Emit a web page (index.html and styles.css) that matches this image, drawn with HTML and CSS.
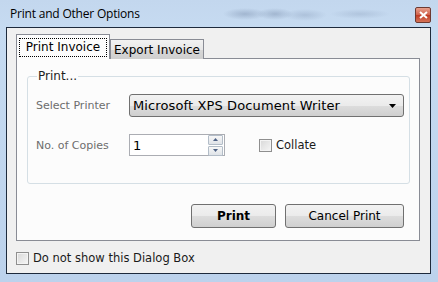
FILE: index.html
```html
<!DOCTYPE html>
<html lang="en">
<head>
  <meta charset="UTF-8">
  <title>Print and Other Options</title>
  <link rel="stylesheet" href="styles.css">
</head>
<body>
  <div class="window">
    <div class="titlebar">
      <span class="title">Print and Other Options</span>
      <span class="close">
        <svg width="9" height="8" viewBox="0 0 9 8"><path d="M1 1 L8 7 M8 1 L1 7" stroke="#fff" stroke-width="2"/></svg>
      </span>
    </div>

    <div class="client">
      <div class="tabs">
        <div class="tab active"><span class="focus">Print Invoice</span></div>
        <div class="tab">Export Invoice</div>
      </div>

      <div class="panel">
        <fieldset class="group">
          <legend>Print...</legend>
          <div class="row">
            <span class="label">Select Printer</span>
            <div class="combo">
              <span>Microsoft XPS Document Writer</span>
              <svg width="7" height="4" viewBox="0 0 7 4"><path d="M0 0 H7 L3.5 4 Z" fill="#000"/></svg>
            </div>
          </div>
          <div class="row">
            <span class="label">No. of Copies</span>
            <div class="spin">
              <span class="value">1</span>
              <div class="spin-btns">
                <span class="spin-btn"><svg width="5" height="3" viewBox="0 0 5 3"><path d="M0 3 H5 L2.5 0 Z" fill="#4d6185"/></svg></span>
                <span class="spin-btn"><svg width="5" height="3" viewBox="0 0 5 3"><path d="M0 0 H5 L2.5 3 Z" fill="#4d6185"/></svg></span>
              </div>
            </div>
            <span class="check"></span>
            <span class="check-text">Collate</span>
          </div>
        </fieldset>

        <div class="actions">
          <button class="btn primary">Print</button>
          <button class="btn cancel">Cancel Print</button>
        </div>
      </div>

      <div class="footer">
        <span class="check"></span>
        <span class="check-text">Do not show this Dialog Box</span>
      </div>
    </div>
  </div>
</body>
</html>
```

FILE: styles.css
```css
body { margin: 0; font-family: "DejaVu Sans", Verdana, sans-serif; font-size: 11px; color: #000; }

.window {
  width: 438px; height: 282px; box-sizing: border-box;
  display: flex; flex-direction: column;
  padding: 0 7px 8px 6px;
  background:
    radial-gradient(ellipse 22px 6px at 245px 14px, rgba(120,140,170,.45), transparent),
    radial-gradient(ellipse 18px 6px at 275px 14px, rgba(120,140,170,.45), transparent),
    radial-gradient(ellipse 22px 6px at 305px 15px, rgba(130,150,180,.35), transparent),
    radial-gradient(ellipse 30px 5px at 360px 14px, rgba(130,150,180,.3), transparent),
    linear-gradient(to bottom, #c3d7ee, #c6dbf1 30px, #bcd2ec);
}

.titlebar { height: 27px; display: flex; align-items: flex-start; justify-content: space-between; }
.title { font-family: "Open Sans", "Noto Sans", sans-serif; font-size: 12px; color: #000; margin: 5px 0 0 4px; letter-spacing: -0.2px; }
.close {
  width: 14px; height: 14px; margin: 7px 0 0 0;
  display: flex; align-items: center; justify-content: center;
  border: 1px solid #6d3a32; border-radius: 2px;
  background: linear-gradient(to bottom, #e8a08c, #d0604a 50%, #c03a22 51%, #d4745a);
}

.client {
  flex: 1; background: #f0f0f0; border: 1px solid #1d2a3c;
  padding: 7px 10px 0 9px;
  display: flex; flex-direction: column;
}

.tabs { display: flex; align-items: flex-end; height: 24px; margin-bottom: -1px; position: relative; z-index: 1; }
.tab {
  width: 92px; height: 19px; font-size: 12px;
  border: 1px solid #898c95; border-bottom: none;
  background: linear-gradient(to bottom, #f2f2f2, #e7e7e7 50%, #d7d7d7 51%, #cfcfcf);
  display: flex; align-items: center; justify-content: center;
}
.tab.active { height: 24px; background: #fcfcfc; }
.focus { border: 1px dotted #000; padding: 1px 3px 2px; width: 80px; text-align: center; }

.panel {
  height: 181px; background: #fcfcfc; border: 1px solid #898c95;
  padding: 0 15px 0 10px;
  display: flex; flex-direction: column;
}

.group {
  margin: 10px -6px 0 0; padding: 11px 0 27px 8px;
  border: 1px solid #d5dfe5; border-radius: 3px;
  display: flex; flex-direction: column; gap: 17px;
}
.group legend { font-size: 12px; color: #1e1e1e; padding: 0 1px; margin-left: 1px; }

.row { display: flex; align-items: center; }
.label { width: 93px; color: #6d6d6d; }

.combo {
  width: 263px; height: 21px; box-sizing: content-box;
  border: 1px solid #707070; border-radius: 3px;
  background: linear-gradient(to bottom, #f2f2f2, #ebebeb 50%, #dddddd 51%, #cfcfcf);
  display: flex; align-items: center; justify-content: space-between;
  padding: 0 7px 0 3px;
  font-size: 13px; letter-spacing: 0.12px;
}

.spin {
  width: 94px; height: 20px; border: 1px solid #abadb3; background: #fff;
  display: flex; align-items: center; justify-content: space-between;
}
.spin .value { font-size: 13px; margin-left: 3px; }
.spin-btns { display: flex; flex-direction: column; gap: 1px; margin-right: 1px; }
.spin-btn {
  width: 13px; height: 8px; border: 1px solid #b3bdc8; border-radius: 1px;
  background: linear-gradient(to bottom, #f7f7f7, #dfe3e8);
  display: flex; align-items: center; justify-content: center;
}

.check {
  width: 11px; height: 11px; border: 1px solid #8f8f8f;
  background: linear-gradient(135deg, #d8d8d8, #f6f6f6);
  box-shadow: inset 0 0 0 1px #f4f4f4;
  flex: none;
}
.row .check { margin-left: 34px; }
.check-text { margin-left: 4px; font-size: 11.5px; color: #1a1a1a; }

.actions { display: flex; justify-content: flex-end; gap: 9px; margin-top: 20px; }
.btn {
  height: 24px; font-family: inherit; font-size: 12px; color: #000;
  border: 1px solid #707070; border-radius: 3px;
  background: linear-gradient(to bottom, #f2f2f2, #ebebeb 50%, #dddddd 51%, #cfcfcf);
  padding: 0;
}
.btn.primary { width: 85px; font-weight: bold; }
.btn.cancel { width: 119px; }

.footer { display: flex; align-items: center; margin-top: 10px; }
```
